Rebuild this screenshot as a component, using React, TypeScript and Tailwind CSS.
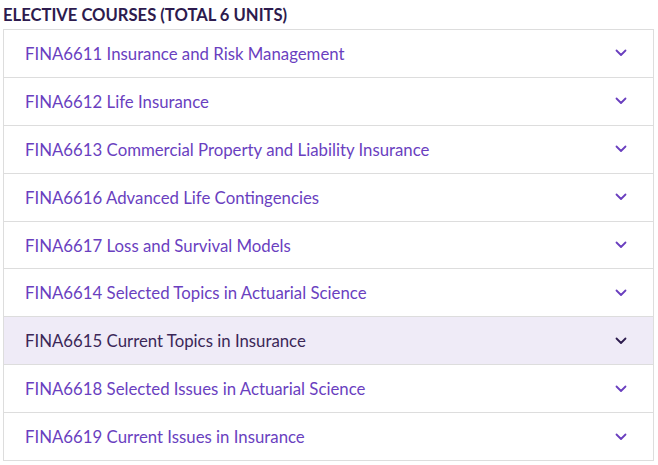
import React from 'react';

const courses = [
  'FINA6611 Insurance and Risk Management',
  'FINA6612 Life Insurance',
  'FINA6613 Commercial Property and Liability Insurance',
  'FINA6616 Advanced Life Contingencies',
  'FINA6617 Loss and Survival Models',
  'FINA6614 Selected Topics in Actuarial Science',
  'FINA6615 Current Topics in Insurance',
  'FINA6618 Selected Issues in Actuarial Science',
  'FINA6619 Current Issues in Insurance',
];

const Chevron = ({ className }: { className: string }) => (
  <svg width="12" height="8" viewBox="0 0 12 8" className={className} fill="none">
    <path d="M1.5 1.5 L6 6 L10.5 1.5" stroke="currentColor" strokeWidth="1.8" strokeLinecap="round" strokeLinejoin="round" />
  </svg>
);

export default function App() {
  const active = 6;
  return (
    <div className="bg-white w-[658px] h-[465px] pl-[3px] pr-[4px] pt-[5px] font-['Lato','Noto_Sans',sans-serif]">
      <h2 className="text-[16.6px] font-bold text-[#2d1b4e] leading-[21px] mb-[3px] uppercase">
        Elective Courses (Total 6 Units)
      </h2>
      <div className="border border-[#dddddd] border-b-0">
        {courses.map((c, i) => (
          <div
            key={c}
            className={`flex items-center justify-between h-[47.9px] border-b border-[#dddddd] pl-[21px] pr-[26px] ${
              i === active ? 'bg-[#efebf7]' : 'bg-white'
            }`}
          >
            <span className={`text-[16.8px] leading-[22px] pt-[1px] ${i === active ? 'text-[#3b2757]' : 'text-[#6a3fbf]'}`}>{c}</span>
            <Chevron className={i === active ? 'text-[#2d1b4e]' : 'text-[#6a3fbf]'} />
          </div>
        ))}
      </div>
    </div>
  );
}
